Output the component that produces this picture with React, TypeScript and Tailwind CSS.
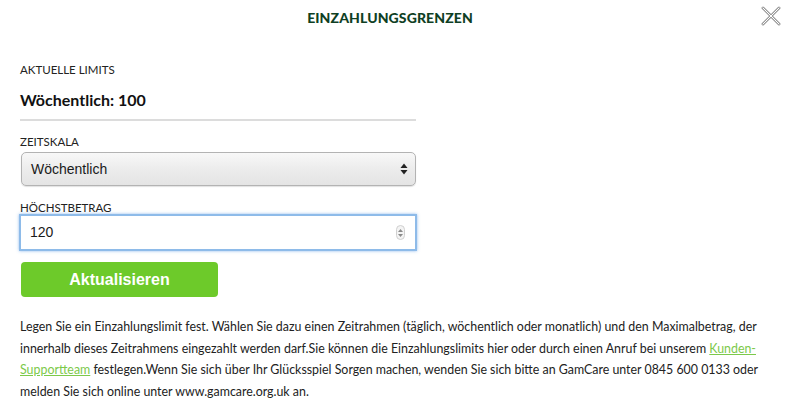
import React from 'react';

const avenir = { fontFamily: 'Lato, "Noto Sans", sans-serif' };
const helvetica = { fontFamily: '"Liberation Sans", Arial, sans-serif' };

function CloseIcon() {
  return (
    <svg width="22" height="22" viewBox="0 0 22 22" className="block">
      <path d="M3 3 L19 19 M19 3 L3 19" stroke="#9b9b9b" strokeWidth="3" strokeLinecap="round" />
      <path d="M3 3 L19 19 M19 3 L3 19" stroke="#ffffff" strokeWidth="1" strokeLinecap="round" />
    </svg>
  );
}

function SelectArrows() {
  return (
    <svg width="8" height="12" viewBox="0 0 8 12">
      <path d="M4 0.5 L7.5 5 L0.5 5 Z" fill="#222" />
      <path d="M4 11.5 L7.5 7 L0.5 7 Z" fill="#222" />
    </svg>
  );
}

function Spinner() {
  return (
    <div className="flex h-[15px] w-[9px] flex-col items-center justify-center gap-[2px] rounded-full border border-[#d0d0d0] bg-[#f4f4f4]">
      <svg width="5" height="3" viewBox="0 0 5 3"><path d="M2.5 0 L5 3 L0 3 Z" fill="#8a8a8a" /></svg>
      <svg width="5" height="3" viewBox="0 0 5 3"><path d="M2.5 3 L5 0 L0 0 Z" fill="#8a8a8a" /></svg>
    </div>
  );
}

export default function App() {
  return (
    <div className="relative h-[408px] w-[800px] overflow-hidden bg-white text-[#1b1b1b]">
      {/* Header */}
      <div className="flex h-[35px] items-center justify-center pr-[20px]">
        <h1 className="text-[14px] font-black tracking-[0.1px] text-[#0f3f24]" style={avenir}>
          EINZAHLUNGSGRENZEN
        </h1>
      </div>
      <button className="absolute right-[18px] top-[5px]">
        <CloseIcon />
      </button>

      {/* Form */}
      <div className="w-[416px] pl-[20px]">
        <div className="mt-[28px] text-[11.5px] leading-[14px] text-[#222]" style={avenir}>AKTUELLE LIMITS</div>
        <div className="mt-[13px] text-[16px] font-bold leading-[20px] text-[#111]" style={avenir}>Wöchentlich: 100</div>
        <div className="mt-[9px] h-[2px] w-[396px] bg-[#dcdcdc]" />

        <div className="mt-[14px] text-[11.5px] leading-[14px] text-[#222]" style={avenir}>ZEITSKALA</div>
        <div className="ml-[1px] mt-[3px] flex h-[34px] w-[395px] items-center justify-between rounded-[5px] border border-[#b3b3b3] bg-gradient-to-b from-[#f8f8f8] via-[#ececec] to-[#e4e4e4] pl-[9px] pr-[7px] shadow-[0_1px_1px_rgba(0,0,0,0.12)]">
          <span className="text-[14px] text-[#1a1a1a]" style={helvetica}>Wöchentlich</span>
          <SelectArrows />
        </div>

        <div className="mt-[15px] text-[11.5px] leading-[14px] text-[#222]" style={avenir}>HÖCHSTBETRAG</div>
        <div className="-ml-[1px] -mt-[1px] flex h-[37px] w-[398px] items-center justify-between border-[2px] border-[#8ebbe9] bg-white pl-[9px] pr-[10px] shadow-[0_0_3px_rgba(100,160,230,0.7)]">
          <span className="text-[14px] text-[#1a1a1a]" style={helvetica}>120</span>
          <Spinner />
        </div>

        <button
          className="ml-[1px] mt-[11px] flex h-[35px] w-[197px] items-center justify-center rounded-[4px] bg-[#6dca2a] text-[16px] font-bold text-white"
          style={helvetica}
        >
          Aktualisieren
        </button>
      </div>

      {/* Info text */}
      <p className="mt-[19px] w-[772px] pl-[20px] text-[12.4px] leading-[21.7px] text-[#222]" style={avenir}>
        Legen Sie ein Einzahlungslimit fest. Wählen Sie dazu einen Zeitrahmen (täglich, wöchentlich oder monatlich) und den Maximalbetrag, der
        innerhalb dieses Zeitrahmens eingezahlt werden darf.Sie können die Einzahlungslimits hier oder durch einen Anruf bei unserem{' '}
        <a className="text-[#7cc94a] underline" href="#">Kunden-Supportteam</a> festlegen.Wenn Sie sich über Ihr Glücksspiel Sorgen machen,
        wenden Sie sich bitte an GamCare unter 0845 600 0133 oder melden Sie sich online unter www.gamcare.org.uk an.
      </p>
    </div>
  );
}
